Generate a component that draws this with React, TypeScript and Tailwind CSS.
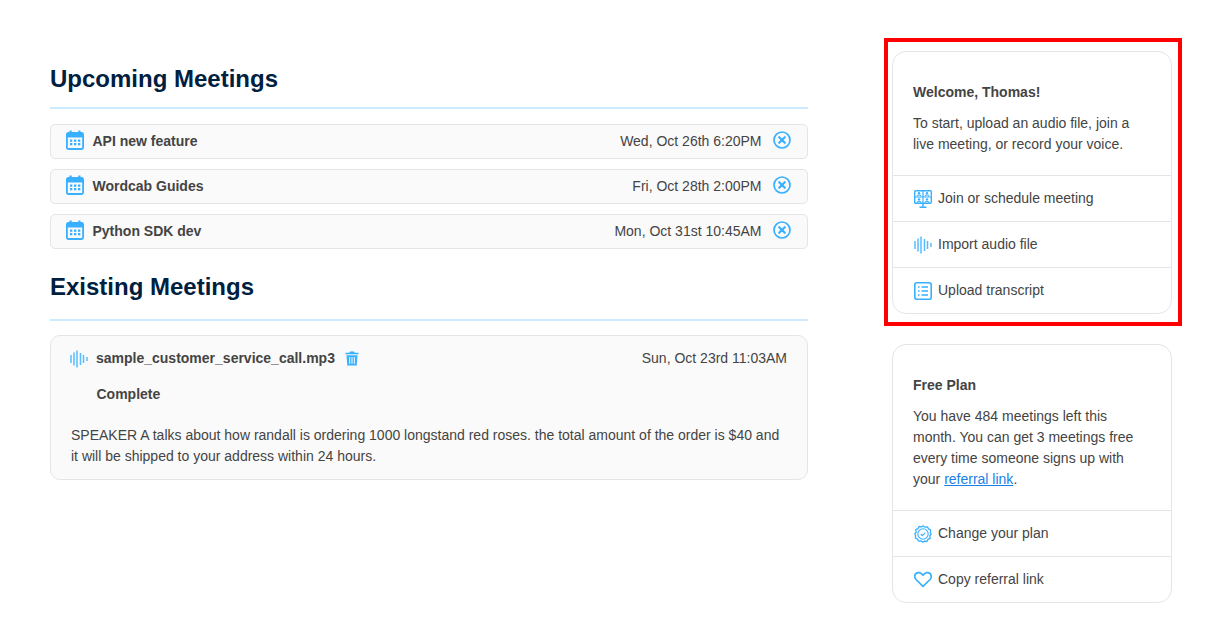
import type { ReactNode } from "react";

const blue = "#38b0ff";

const CalendarIcon = () => (
  <svg width="18" height="20" viewBox="0 0 18 20" className="mb-[4px] shrink-0">
    <rect x="0.900" y="3" width="16.200" height="16" rx="1.500" fill="none" stroke={blue} strokeWidth="1.800" />
    <rect x="1" y="3" width="16" height="4.500" fill={blue} />
    <rect x="3.500" y="0.500" width="2.200" height="4" fill={blue} />
    <rect x="12.300" y="0.500" width="2.200" height="4" fill={blue} />
    {[4, 8, 12].map((x) =>
      [9.500, 13].map((y) => <rect key={`${x}-${y}`} x={x} y={y} width="2.300" height="2.300" fill={blue} />),
    )}
  </svg>
);

const CloseIcon = () => (
  <svg width="18" height="18" viewBox="0 0 18 18" className="mb-[3px] shrink-0">
    <circle cx="9" cy="9" r="8" fill="none" stroke={blue} strokeWidth="1.700" />
    <path d="M6.200 6.200 11.800 11.800M11.800 6.200 6.200 11.800" stroke={blue} strokeWidth="2.200" strokeLinecap="round" />
  </svg>
);

const WaveIcon = () => (
  <svg width="18" height="18" viewBox="0 0 18 18" className="shrink-0">
    <path
      d="M1 5v8M4 2.500v13M7 0.500v17M10.500 3v12M13.500 5v8M17 7v4"
      stroke={blue}
      strokeWidth="1.500"
      strokeOpacity="0.850"
    />
  </svg>
);

const TrashIcon = () => (
  <svg width="14" height="15" viewBox="0 0 14 15" className="shrink-0">
    <path d="M5 0.500h4l.6 1.200H13.500v1.600H.5V1.700h3.900z" fill={blue} />
    <path d="M1.500 4.300h11l-.8 10.200H2.300z" fill={blue} />
    <path d="M4.700 6v6.800M7 6v6.800M9.300 6v6.800" stroke="#fafafa" strokeWidth="1" />
  </svg>
);

const MeetingIcon = () => (
  <svg width="18" height="18" viewBox="0 0 18 18" className="shrink-0">
    <rect x="0.700" y="0.700" width="16.600" height="12.600" rx="1" fill="none" stroke={blue} strokeWidth="1.400" />
    <path d="M9 1v12M1 7h16" stroke={blue} strokeWidth="1.200" />
    <circle cx="5" cy="3.200" r="1.200" fill={blue} />
    <circle cx="13" cy="3.200" r="1.200" fill={blue} />
    <circle cx="5" cy="9.400" r="1.200" fill={blue} />
    <circle cx="13" cy="9.400" r="1.200" fill={blue} />
    <path
      d="M3 6.500c0-2 4-2 4 0M11 6.500c0-2 4-2 4 0M3 12.800c0-2 4-2 4 0M11 12.800c0-2 4-2 4 0"
      fill="none"
      stroke={blue}
      strokeWidth="1.100"
    />
    <path d="M9 13.500v3.500M5.500 17.300h7" stroke={blue} strokeWidth="1.400" />
  </svg>
);

const ListIcon = () => (
  <svg width="18" height="18" viewBox="0 0 18 18" className="shrink-0">
    <rect x="0.800" y="0.800" width="16.400" height="16.400" rx="2" fill="none" stroke={blue} strokeWidth="1.600" />
    <path d="M4 5h1.500M4 9h1.500M4 13h1.500M7.500 5H14M7.500 9H14M7.500 13H14" stroke={blue} strokeWidth="1.400" />
  </svg>
);

const BadgeIcon = () => (
  <svg width="18" height="18" viewBox="0 0 18 18" className="shrink-0">
    <path
      d="M9 .8l2 1.400 2.400-.4 1.100 2.100 2.200 1.100-.4 2.400L17.200 9l-1.400 1.900.4 2.400-2.200 1.100-1.100 2.100-2.400-.4L9 17.200l-2-1.400-2.400.4-1.100-2.100-2.200-1.100.4-2.400L.8 9l1.400-1.900-.4-2.400 2.200-1.100 1.100-2.100 2.400.4z"
      fill="none"
      stroke={blue}
      strokeWidth="1.300"
      strokeLinejoin="round"
    />
    <circle cx="9" cy="9" r="5.200" fill="none" stroke={blue} strokeWidth="1.100" />
    <path d="M6.800 9l1.600 1.600 2.900-3" fill="none" stroke={blue} strokeWidth="1.100" />
  </svg>
);

const HeartIcon = () => (
  <svg width="18" height="17" viewBox="0 0 18 16" className="shrink-0">
    <path
      d="M9 14.800 2 8C.2 6.100.4 3.400 2 2 3.800.5 6.600.7 9 3.600 11.400.7 14.200.5 16 2c1.600 1.400 1.800 4.100 0 6z"
      fill="none"
      stroke={blue}
      strokeWidth="1.700"
      strokeLinejoin="round"
    />
  </svg>
);

const upcoming = [
  { title: "API new feature", date: "Wed, Oct 26th 6:20PM" },
  { title: "Wordcab Guides", date: "Fri, Oct 28th 2:00PM" },
  { title: "Python SDK dev", date: "Mon, Oct 31st 10:45AM" },
];

const ActionRow = ({ icon, label }: { icon: ReactNode; label: string }) => (
  <div className="flex h-[46px] items-center gap-[6px] border-t border-[#e5e5e5] pl-[21px]">
    {icon}
    <span>{label}</span>
  </div>
);

export default function App() {
  return (
    <div className="flex h-[636px] w-[1205px] bg-white pl-[50px] font-['Liberation_Sans',Arial,sans-serif] text-[14px] leading-[21px] text-[#444444]">
      <main className="w-[758px] shrink-0">
        <h2 className="mt-[65px] text-[24px] leading-[28px] font-bold text-[#00203f]">Upcoming Meetings</h2>
        <div className="mt-[14px] h-[2px] bg-[#cdebff]" />
        <div className="mt-[15px] flex flex-col gap-[10px]">
          {upcoming.map((m) => (
            <div
              key={m.title}
              className="flex h-[35px] items-center rounded-[5px] border border-[#e5e5e5] bg-[#fafafa] pr-[16px] pl-[15px]"
            >
              <CalendarIcon />
              <span className="ml-[8.500px] font-bold">{m.title}</span>
              <span className="mr-[11.500px] ml-auto">{m.date}</span>
              <CloseIcon />
            </div>
          ))}
        </div>
        <h2 className="mt-[24px] text-[24px] leading-[28px] font-bold text-[#00203f]">Existing Meetings</h2>
        <div className="mt-[18px] h-[2px] bg-[#cdebff]" />
        <div className="mt-[14px] h-[145px] rounded-[10px] border border-[#e5e5e5] bg-[#fafafa] pt-[12px] pr-[20px] pl-[19px]">
          <div className="flex items-center">
            <WaveIcon />
            <span className="ml-[8px] font-bold">sample_customer_service_call.mp3</span>
            <span className="ml-[10px]">
              <TrashIcon />
            </span>
            <span className="ml-auto">Sun, Oct 23rd 11:03AM</span>
          </div>
          <div className="mt-[15px] pl-[26.500px] font-bold">Complete</div>
          <p className="mt-[20px] pl-[1px]">
            SPEAKER A talks about how randall is ordering 1000 longstand red roses. the total amount of the order is $40
            and it will be shipped to your address within 24 hours.
          </p>
        </div>
      </main>

      <aside className="relative ml-[84px] w-[280px] shrink-0 pt-[51px]">
        <div className="rounded-[14px] border border-[#e5e5e5]">
          <div className="h-[123px] px-[20px] pt-[30px]">
            <div className="font-bold">Welcome, Thomas!</div>
            <p className="mt-[10px]">To start, upload an audio file, join a live meeting, or record your voice.</p>
          </div>
          <ActionRow icon={<MeetingIcon />} label="Join or schedule meeting" />
          <ActionRow icon={<WaveIcon />} label="Import audio file" />
          <ActionRow icon={<ListIcon />} label="Upload transcript" />
        </div>
        <div className="mt-[30px] rounded-[14px] border border-[#e5e5e5]">
          <div className="h-[165px] px-[20px] pt-[30px]">
            <div className="font-bold">Free Plan</div>
            <p className="mt-[10px]">
              You have 484 meetings left this month. You can get 3 meetings free every time someone signs up with your{" "}
              <a className="text-[#1a7fe8] underline">referral link</a>.
            </p>
          </div>
          <ActionRow icon={<BadgeIcon />} label="Change your plan" />
          <ActionRow icon={<HeartIcon />} label="Copy referral link" />
        </div>
        {/* red highlight box over the first card */}
        <div className="pointer-events-none absolute top-[38px] -left-[8px] h-[288px] w-[298px] border-4 border-[#ff0000]" />
      </aside>
    </div>
  );
}
